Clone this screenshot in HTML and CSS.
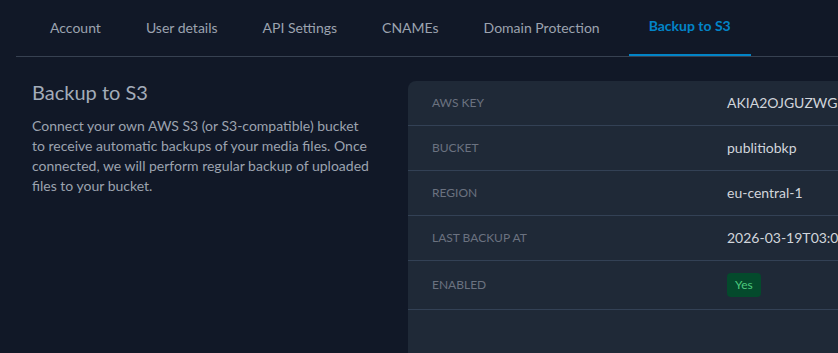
FILE: index.html
```html
<!DOCTYPE html>
<html lang="en">
<head>
    <meta charset="UTF-8">
    <meta name="viewport" content="width=device-width, initial-scale=1.0">
    <title>Backup to S3</title>
    <link rel="stylesheet" href="styles.css">
</head>
<body>
    <nav class="tabs">
        <a href="#" class="tab">Account</a>
        <a href="#" class="tab">User details</a>
        <a href="#" class="tab">API Settings</a>
        <a href="#" class="tab">CNAMEs</a>
        <a href="#" class="tab">Domain Protection</a>
        <a href="#" class="tab active">Backup to S3</a>
    </nav>

    <section class="settings">
        <div class="intro">
            <h2>Backup to S3</h2>
            <p>Connect your own AWS S3 (or S3-compatible) bucket to receive automatic backups of your media files. Once connected, we will perform regular backup of uploaded files to your bucket.</p>
        </div>

        <div class="card">
            <div class="row">
                <div class="label">AWS Key</div>
                <div class="value">AKIA2OJGUZWGEXAMPLE7</div>
            </div>
            <div class="row">
                <div class="label">Bucket</div>
                <div class="value">publitiobkp</div>
            </div>
            <div class="row">
                <div class="label">Region</div>
                <div class="value">eu-central-1</div>
            </div>
            <div class="row">
                <div class="label">Last backup at</div>
                <div class="value">2026-03-19T03:00:00Z</div>
            </div>
            <div class="row">
                <div class="label">Enabled</div>
                <div class="value"><span class="badge">Yes</span></div>
            </div>
        </div>
    </section>
</body>
</html>
```

FILE: styles.css
```css
body {
    margin: 0;
    background-color: #111827;
    font-family: Lato, "Noto Sans", sans-serif;
    color: #9ca3af;
    overflow: hidden;
}
.tabs {
    display: flex;
    gap: 13px;
    margin-left: 16px;
    padding-left: 18px;
    border-bottom: 1px solid #374151;
}
.tab {
    padding: 18px 16px 16px;
    font-size: 14px;
    line-height: 20px;
    color: #9ca3af;
    text-decoration: none;
    border-bottom: 2px solid transparent;
}
.tab.active {
    padding: 16px 20px 18px;
    color: #0284c7;
    font-weight: bold;
    border-bottom-color: #0284c7;
}
.settings {
    display: flex;
    gap: 24px;
    padding: 24px 0 0 32px;
}
.intro {
    flex: 0 0 352px;
}
.intro h2 {
    margin: -1px 0 12px;
    font-size: 20px;
    font-weight: normal;
    line-height: 24px;
    color: #a3acb9;
}
.intro p {
    margin: 0;
    max-width: 340px;
    font-size: 14px;
    line-height: 20px;
}
.card {
    flex: 0 0 600px;
    background-color: #1f2937;
    border-radius: 8px;
    padding-bottom: 60px;
}
.row {
    display: flex;
    align-items: center;
    padding: 12px 24px;
    border-bottom: 1px solid #334155;
}
.label {
    flex: 0 0 295px;
    font-size: 12px;
    line-height: 20px;
    text-transform: uppercase;
    color: #6b7280;
}
.value {
    font-size: 14px;
    line-height: 20px;
    color: #d1d5db;
    white-space: nowrap;
}
.badge {
    display: inline-block;
    padding: 2px 8px;
    border-radius: 4px;
    background-color: #044a2c;
    color: #4ccb7e;
    font-size: 12px;
    line-height: 20px;
}
```
